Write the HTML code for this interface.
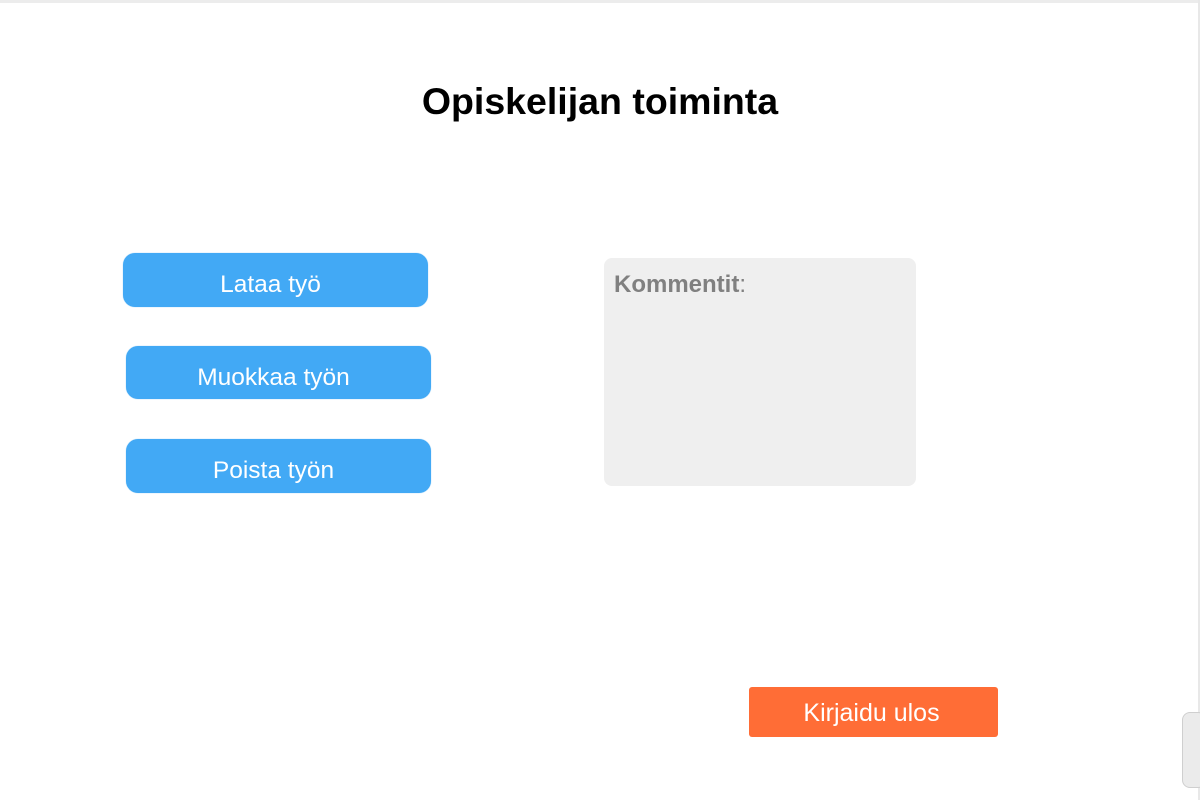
<!DOCTYPE html>
<html><head><meta charset="utf-8"><style>
body{margin:0;width:1200px;height:800px;background:#fff;font-family:"Liberation Sans",Arial,sans-serif;position:relative;overflow:hidden}
.top{position:absolute;left:0;top:0;width:1200px;height:3px;background:#ececec}
.rb{position:absolute;right:0;top:0;width:2px;height:800px;background:#e8e8e8}
.sc{position:absolute;left:1182px;top:712px;width:24px;height:76px;background:#ebebeb;border:1px solid #cfcfcf;border-radius:8px;box-sizing:border-box}
h1{position:absolute;top:80px;left:0;width:1200px;text-align:center;margin:0;font-size:37.5px;font-weight:bold;color:#000}
.b{position:absolute;width:305px;height:54px;background:#42a9f5;border-radius:12px;color:#fff;font-size:24.5px;text-align:center;line-height:64px;box-sizing:border-box;padding-right:10px;box-shadow:0 0 1px #8cc8f5}
.c{position:absolute;left:604px;top:258px;width:312px;height:228px;background:#efefef;border-radius:8px;font-size:24px;color:#808080}
.c span{position:absolute;left:10px;top:13px}
.o{position:absolute;left:749px;top:687px;width:249px;height:50px;background:#ff6d36;border-radius:3px;color:#fff;font-size:25px;text-align:center;line-height:52px;box-sizing:border-box;padding-right:4px}
</style></head><body>
<div class="top"></div><div class="rb"></div><div class="sc"></div>
<h1>Opiskelijan toiminta</h1>
<div class="b" style="left:123px;top:253px">Lataa työ</div>
<div class="b" style="left:126px;top:346px;height:53px">Muokkaa työn</div>
<div class="b" style="left:126px;top:439px">Poista työn</div>
<div class="c"><span><b>Kommentit</b>:</span></div>
<div class="o">Kirjaidu ulos</div>
</body></html>
